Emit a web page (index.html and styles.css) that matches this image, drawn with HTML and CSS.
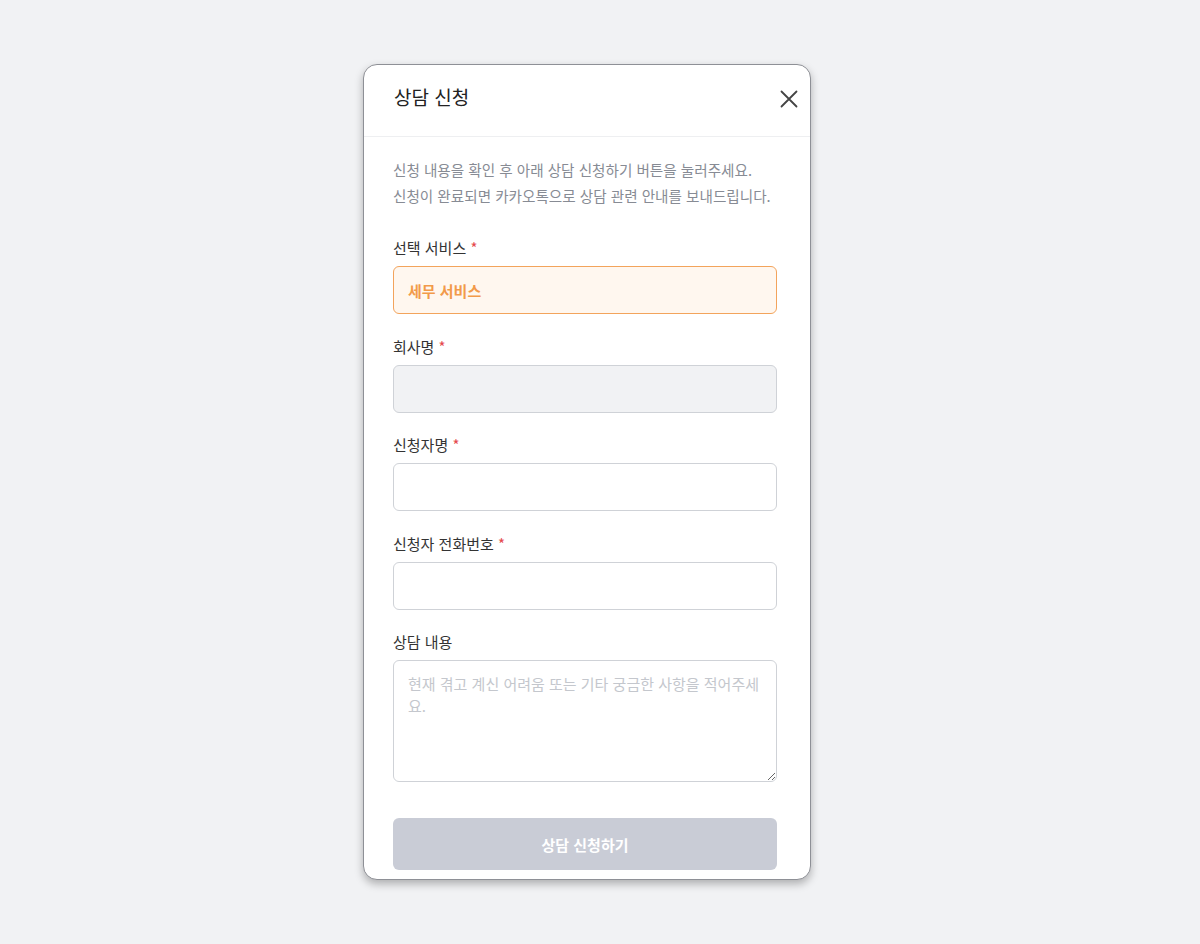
FILE: index.html
```html
<!DOCTYPE html>
<html lang="ko">
<head>
    <meta charset="UTF-8">
    <meta name="viewport" content="width=device-width, initial-scale=1.0">
    <title>상담 신청</title>
    <link rel="stylesheet" href="styles.css">
</head>
<body>
    <div class="modal">
        <div class="modal-head">
            <h2>상담 신청</h2>
            <button class="close-btn" aria-label="닫기">
                <svg width="18" height="18" viewBox="0 0 18 18">
                    <path d="M1.5 1.5 L16.5 16.5 M16.5 1.5 L1.5 16.5" stroke="#444" stroke-width="1.8" stroke-linecap="round" fill="none"/>
                </svg>
            </button>
        </div>
        <div class="modal-body">
            <p class="desc">신청 내용을 확인 후 아래 상담 신청하기 버튼을 눌러주세요.<br>신청이 완료되면 카카오톡으로 상담 관련 안내를 보내드립니다.</p>

            <div class="field">
                <label>선택 서비스 <span class="req">*</span></label>
                <div class="input selected">세무 서비스</div>
            </div>
            <div class="field">
                <label>회사명 <span class="req">*</span></label>
                <input class="input disabled" type="text" disabled>
            </div>
            <div class="field">
                <label>신청자명 <span class="req">*</span></label>
                <input class="input" type="text">
            </div>
            <div class="field">
                <label>신청자 전화번호 <span class="req">*</span></label>
                <input class="input" type="text">
            </div>
            <div class="field">
                <label>상담 내용</label>
                <textarea class="input area" placeholder="현재 겪고 계신 어려움 또는 기타 궁금한 사항을 적어주세요."></textarea>
            </div>

            <button class="submit-btn" disabled>상담 신청하기</button>
        </div>
    </div>
</body>
</html>
```

FILE: styles.css
```css
* {
    margin: 0;
    padding: 0;
    box-sizing: border-box;
}
body {
    background: #f1f2f4;
    font-family: "Noto Sans CJK KR", "Noto Sans", sans-serif;
    display: flex;
    justify-content: center;
    align-items: center;
    height: 100vh;
    padding-right: 26px;
}
.modal {
    width: 448px;
    height: 816px;
    background: #fff;
    border: 1px solid #8e9096;
    border-radius: 14px;
    box-shadow: 0 4px 8px rgba(0, 0, 0, 0.28);
    overflow: hidden;
}
.modal-head {
    height: 72px;
    border-bottom: 1px solid #eeeff1;
    display: flex;
    justify-content: space-between;
    align-items: center;
    padding: 0 9px 0 30px;
}
.modal-head h2 {
    font-size: 19px;
    font-weight: 400;
    color: #222;
    margin-top: -9px;
}
.close-btn {
    border: none;
    background: none;
    width: 24px;
    height: 24px;
    display: flex;
    justify-content: center;
    align-items: center;
    margin-top: -3px;
}
.modal-body {
    padding: 20px 33px 10px 29px;
}
.desc {
    font-size: 14.6px;
    line-height: 26px;
    color: #878b94;
    margin-bottom: 28px;
}
.field {
    margin-bottom: 21.5px;
}
.field label {
    display: block;
    font-size: 15px;
    line-height: 22px;
    color: #333;
    margin-bottom: 7px;
}
.req {
    color: #e5484d;
}
.input {
    display: block;
    width: 100%;
    height: 48px;
    border: 1px solid #cfd2d7;
    border-radius: 6px;
    background: #fff;
    font-family: inherit;
    font-size: 15px;
    padding: 0 14px;
    outline: none;
}
.input.selected {
    background: #fff7ef;
    border-color: #f3a45c;
    color: #f29a4a;
    font-weight: 700;
    display: flex;
    align-items: center;
}
.input.disabled {
    background: #f1f2f4;
}
.input.area {
    height: 122px;
    padding: 12px 14px;
    line-height: 22px;
    resize: vertical;
    color: #333;
}
.input.area::placeholder {
    color: #c4c7cd;
}
.field:last-of-type {
    margin-bottom: 36px;
}
.submit-btn {
    width: 100%;
    height: 52px;
    border: none;
    border-radius: 6px;
    background: #c9ccd6;
    color: #fff;
    font-family: inherit;
    font-size: 15px;
    font-weight: 700;
}
```
